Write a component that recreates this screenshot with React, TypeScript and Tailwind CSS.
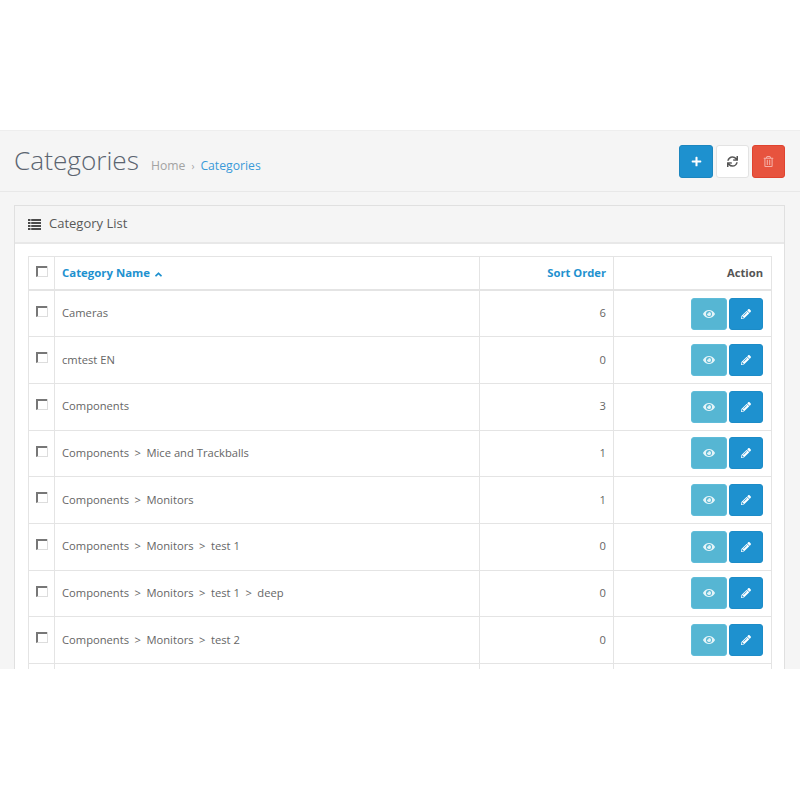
import { FaAngleUp, FaEye, FaPencilAlt, FaPlus, FaRegTrashAlt, FaSync } from "react-icons/fa";

const rows = [
  { name: ["Cameras"], order: 6 },
  { name: ["cmtest EN"], order: 0 },
  { name: ["Components"], order: 3 },
  { name: ["Components", "Mice and Trackballs"], order: 1 },
  { name: ["Components", "Monitors"], order: 1 },
  { name: ["Components", "Monitors", "test 1"], order: 0 },
  { name: ["Components", "Monitors", "test 1", "deep"], order: 0 },
  { name: ["Components", "Monitors", "test 2"], order: 0 },
];

function Check() {
  return (
    <input
      type="checkbox"
      className="block h-[11px] w-[11px] appearance-none border-2 border-t-[#777] border-l-[#777] border-r-0 border-b-[1px] border-b-[#ddd] bg-white shadow-[1px_0_0_#ddd]"
    />
  );
}

function ListIcon() {
  return (
    <svg width="13" height="11" viewBox="0 0 13 11" fill="#4a4a4a">
      <rect x="0" y="0" width="2.5" height="2" />
      <rect x="3.2" y="0" width="9.8" height="2" />
      <rect x="0" y="3" width="2.5" height="2" />
      <rect x="3.2" y="3" width="9.8" height="2" />
      <rect x="0" y="6" width="2.5" height="2" />
      <rect x="3.2" y="6" width="9.8" height="2" />
      <rect x="0" y="9" width="2.5" height="2" />
      <rect x="3.2" y="9" width="9.8" height="2" />
    </svg>
  );
}

export default function App() {
  return (
    <div className="h-[800px] bg-white pt-[130px] font-['Open_Sans',sans-serif] text-[11.2px] text-[#666]">
      <div className="h-[539px] overflow-hidden border-t border-[#eeeeee] bg-[#f5f5f5]">
        <div className="flex h-[61px] items-center justify-between border-b border-[#e8e8e8] pl-[14px] pr-[15px]">
          <div className="flex items-baseline">
            <h1 className="text-[26.2px] font-light leading-none text-[#5b6470]">Categories</h1>
            <div className="ml-[12px] flex items-baseline text-[12.2px] text-[#a3a3a3]">
              <span>Home</span>
              <span className="mx-[6px] text-[10px]">›</span>
              <span className="text-[#3a9ad9]">Categories</span>
            </div>
          </div>
          <div className="flex gap-[3px]">
            <button className="flex h-[33px] w-[34px] items-center justify-center rounded-[3px] border border-[#1c86bf] bg-[#1e91cf] text-white">
              <FaPlus className="text-[11px]" />
            </button>
            <button className="flex h-[33px] w-[33px] items-center justify-center rounded-[3px] border border-[#e3e3e3] bg-white text-[#555]">
              <FaSync className="text-[11px]" />
            </button>
            <button className="flex h-[33px] w-[33px] items-center justify-center rounded-[3px] border border-[#e0432f] bg-[#e7533e] text-[#f6b0a8]">
              <FaRegTrashAlt className="text-[11px]" />
            </button>
          </div>
        </div>

        <div className="ml-[14px] mr-[15px] mt-[13px] border border-b-0 border-[#e0e0e0] bg-white pb-[20px]">
          <div className="flex h-[38px] items-center gap-[8px] border-b-2 border-[#e8e8e8] bg-[#f5f5f5] pl-[13px] text-[13px] text-[#595959]">
            <ListIcon />
            <span>Category List</span>
          </div>
          <div className="px-[13px] pt-[12px]">
            <table className="w-[743px] table-fixed border-collapse">
              <colgroup>
                <col className="w-[26px]" />
                <col className="w-[425px]" />
                <col className="w-[134px]" />
                <col className="w-[158px]" />
              </colgroup>
              <thead>
                <tr className="h-[33.6px] border-b-2 border-[#e4e4e4] font-bold">
                  <td className="border border-b-0 border-[#e4e4e4] pl-[7px] align-top pt-[9px]"><Check /></td>
                  <td className="border border-b-0 border-[#e4e4e4] px-[7px] text-[11.4px] text-[#1e91cf]">
                    Category Name <FaAngleUp className="inline text-[11px]" />
                  </td>
                  <td className="border border-b-0 border-[#e4e4e4] px-[7px] text-right text-[#1e91cf]">Sort Order</td>
                  <td className="border border-b-0 border-[#e4e4e4] pl-[7px] pr-[8px] text-right text-[#555]">Action</td>
                </tr>
              </thead>
              <tbody>
                {rows.map((row) => (
                  <tr key={row.name.join("/")} className="h-[46.67px]">
                    <td className="border border-[#e4e4e4] pl-[7px] align-top pt-[15px]"><Check /></td>
                    <td className="border border-[#e4e4e4] px-[7px] text-[#666]">
                      {row.name.map((part, i) => (
                        <span key={part}>
                          {i > 0 && <span className="mx-[5.5px]">&gt;</span>}
                          {part}
                        </span>
                      ))}
                    </td>
                    <td className="border border-[#e4e4e4] px-[7px] text-right">{row.order}</td>
                    <td className="border border-[#e4e4e4] pl-[7px] pr-[8px]">
                      <div className="flex justify-end gap-[2px]">
                        <button className="flex h-[32px] w-[36px] items-center justify-center rounded-[3px] border border-[#5fbcd9] bg-[#56b6d3] text-[#e4f4f8]">
                          <FaEye className="text-[12px]" />
                        </button>
                        <button className="flex h-[32px] w-[34px] items-center justify-center rounded-[3px] border border-[#1c8cc8] bg-[#1e91cf] text-white">
                          <FaPencilAlt className="text-[10px]" />
                        </button>
                      </div>
                    </td>
                  </tr>
                ))}
                <tr className="h-[46px]">
                  <td className="border border-[#e4e4e4]"></td>
                  <td className="border border-[#e4e4e4]"></td>
                  <td className="border border-[#e4e4e4]"></td>
                  <td className="border border-[#e4e4e4]"></td>
                </tr>
              </tbody>
            </table>
          </div>
        </div>
      </div>
    </div>
  );
}
